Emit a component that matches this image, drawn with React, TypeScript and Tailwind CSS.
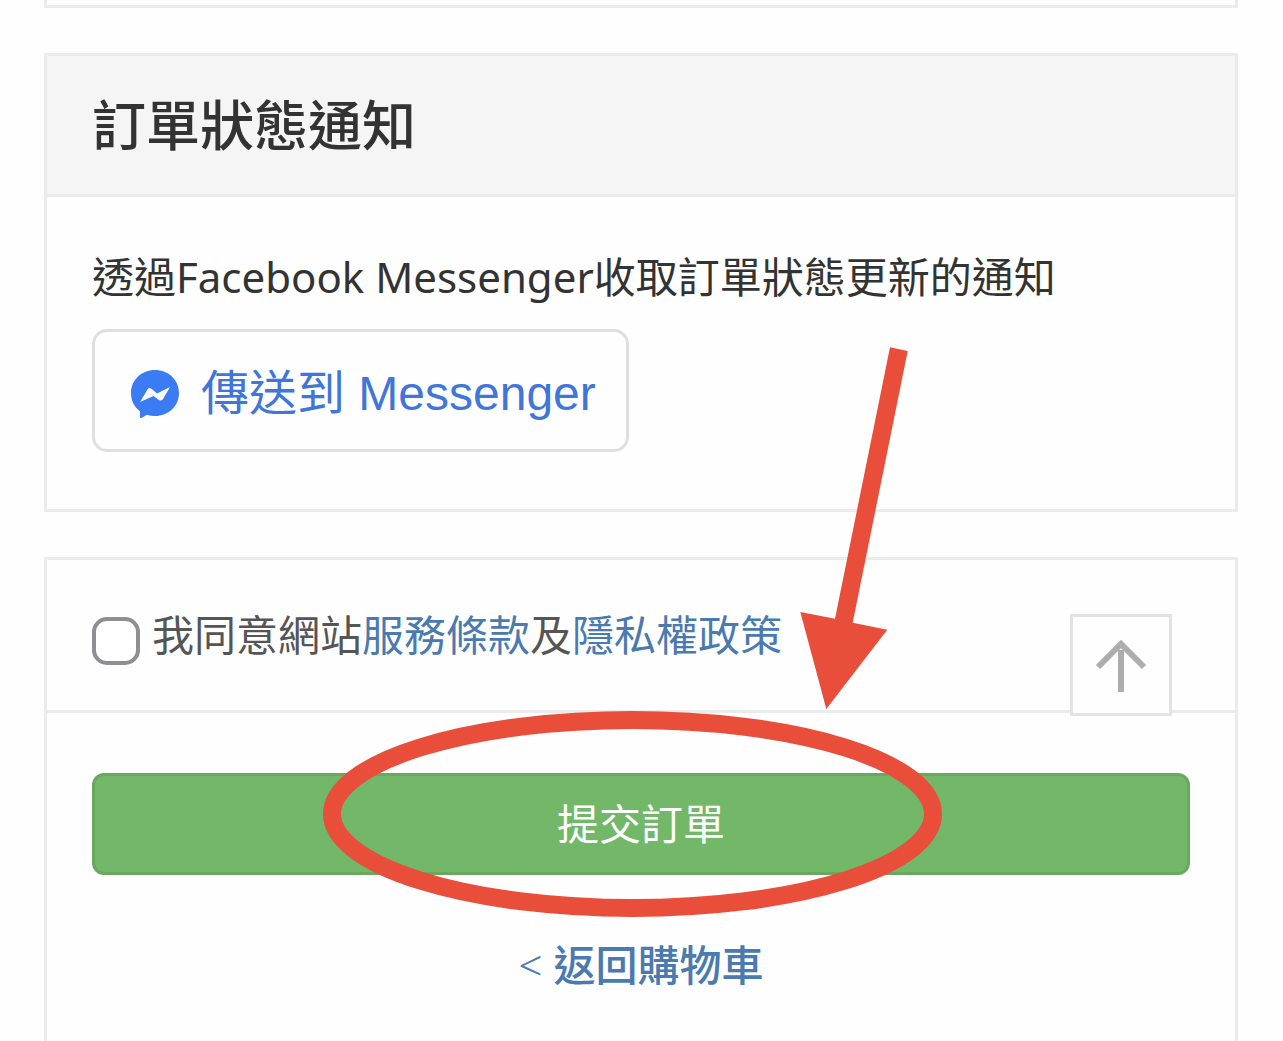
import React, { useState } from "react";

function MessengerIcon() {
  return (
    <svg width="48" height="48" viewBox="0 0 48 48" aria-hidden="true">
      <path
        fill="#3b7cf5"
        d="M24 0C10.700 0 0 9.800 0 23c0 8 3.400 14 9 18.300V47c0 .8.800 1.300 1.500.9l5.500-3.100c2.500.8 5.200 1.200 8 1.200 13.300 0 24-9.800 24-23S37.300 0 24 0z"
      />
      <path
        fill="#fff"
        d="M9 32 16.500 19.500c1-1.600 2.400-1.800 3.900-.8l5.600 4.800L39 17 32 29c-1 1.600-2.500 1.800-4 .9l-5.500-4z"
      />
    </svg>
  );
}

function ArrowUpIcon() {
  return (
    <svg
      width="54"
      height="54"
      viewBox="0 0 54 54"
      fill="none"
      stroke="#adadad"
      strokeWidth="6"
      aria-hidden="true"
    >
      <path d="M4 29 27 6l23 23" />
      <path d="M27 12v42" />
    </svg>
  );
}

// Red circle around the submit button with an arrow pointing at it
function SubmitHint() {
  return (
    <svg
      className="pointer-events-none absolute left-1/2 -bottom-[42px] -translate-x-1/2 z-20"
      width="636"
      height="570"
      viewBox="0 0 636 570"
      aria-hidden="true"
    >
      <ellipse
        cx="309.500"
        cy="467"
        rx="300.500"
        ry="94"
        fill="none"
        stroke="#e94e3b"
        strokeWidth="18"
      />
      <path
        fill="#e94e3b"
        d="M567 .3 584.700 4 529.700 275.700 564.300 282.700 503.300 362 477.300 265 512 271.700z"
      />
    </svg>
  );
}

function App() {
  const [agreed, setAgreed] = useState(false);

  return (
    <div
      lang="zh-Hant"
      className="flex min-h-screen flex-col gap-[45px] bg-[#fefefe] pr-[45px] pl-[44px] text-[42px] leading-[60px] text-[#333] font-['Noto_Sans','Noto_Sans_CJK_TC',sans-serif]"
    >
      {/* End of the previous section */}
      <div className="h-2 border-3 border-t-0 border-[#ebebeb]" />

      {/* Order notifications */}
      <section className="border-3 border-[#ebebeb]">
        <h2 className="border-b-3 border-[#ebebeb] bg-[#f5f5f5] px-[45px] py-9 text-[54px] leading-[66px] font-medium">
          訂單狀態通知
        </h2>
        <div className="px-[45px] pt-[50px] pb-[57px]">
          <p className="mb-[22px]">
            透過Facebook Messenger收取訂單狀態更新的通知
          </p>
          <button
            type="button"
            className="flex h-[123px] cursor-pointer items-center gap-[22px] rounded-[15px] border-3 border-[#dfdfdf] pt-[6px] pr-[30px] pl-9 text-[48px] text-[#3f76d8] font-['Liberation_Sans','Noto_Sans_CJK_TC',sans-serif]"
          >
            <MessengerIcon />
            傳送到 Messenger
          </button>
        </div>
      </section>

      {/* Terms + submit */}
      <section className="flex-1 border-3 border-b-0 border-[#ebebeb]">
        <div className="relative flex items-end gap-3 border-b-3 border-[#ebebeb] px-[45px] py-[45px] text-[#555]">
          <input
            id="agree"
            type="checkbox"
            checked={agreed}
            onChange={(e) => setAgreed(e.target.checked)}
            className="size-12 shrink-0 appearance-none rounded-[15px] border-4 border-[#8e8e93] bg-white checked:bg-[#8e8e93]"
          />
          <label htmlFor="agree">
            我同意網站
            <a href="#terms" className="text-[#4a7aaf]">
              服務條款
            </a>
            及
            <a href="#privacy" className="text-[#4a7aaf]">
              隱私權政策
            </a>
          </label>
          <button
            type="button"
            aria-label="Back to top"
            onClick={() => window.scrollTo({ top: 0 })}
            className="absolute top-[54px] right-[63px] z-10 flex size-[102px] cursor-pointer items-center justify-center border-3 border-[#e3e3e3] bg-[#fefefe]"
          >
            <ArrowUpIcon />
          </button>
        </div>

        <div className="px-[45px] pt-[60px] pb-12 text-center">
          <div className="relative">
            <button
              type="submit"
              className="block h-[102px] w-full cursor-pointer rounded-xl border-3 border-[#6aa860] bg-[#73b769] text-white"
            >
              提交訂單
            </button>
            <SubmitHint />
          </div>
          <a
            href="#cart"
            className="mt-[60px] inline-block font-medium text-[#4a7aaf]"
          >
            <span className="font-light">&lt;</span> 返回購物車
          </a>
        </div>
      </section>
    </div>
  );
}

export default App;
